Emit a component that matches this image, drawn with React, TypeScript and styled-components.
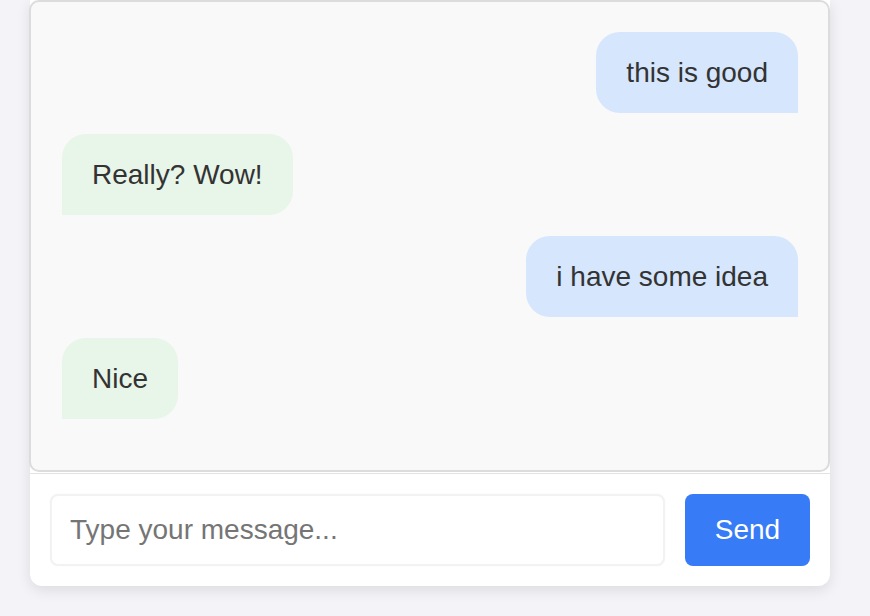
import React from "react";
import styled, { createGlobalStyle } from "styled-components";

const Global = createGlobalStyle`
  html, body {
    margin: 0;
    padding: 0;
    background: #f3f3f8;
    font-family: "Liberation Sans", Arial, sans-serif;
  }
  * { box-sizing: border-box; }
`;

const Page = styled.div`
  width: 870px;
  height: 616px;
  padding: 0 40px 0 30px;
  overflow: hidden;
`;

const Card = styled.div`
  width: 800px;
  background: #ffffff;
  border-radius: 0 0 12px 12px;
  box-shadow: 0 4px 14px rgba(0, 0, 0, 0.1);
  display: flex;
  flex-direction: column;
`;

const Messages = styled.div`
  height: 472px;
  margin: 0 0 1px -1px;
  border: 2px solid #dcdcdc;
  border-radius: 10px;
  background: #f9f9f9;
  padding: 30px 30px 30px 31px;
  display: flex;
  flex-direction: column;
  gap: 21px;
`;

const Bubble = styled.div<{ $mine?: boolean }>`
  align-self: ${(p) => (p.$mine ? "flex-end" : "flex-start")};
  background: ${(p) => (p.$mine ? "#d6e6fc" : "#e8f5e9")};
  color: #333333;
  font-size: 28px;
  line-height: 37px;
  padding: 22px 30px;
  border-radius: ${(p) => (p.$mine ? "24px 24px 0 24px" : "24px 24px 24px 0")};
`;

const InputBar = styled.div`
  border-top: 1px solid #e2e2e2;
  padding: 20px;
  display: flex;
  gap: 20px;
`;

const Input = styled.input`
  flex: 1;
  height: 72px;
  border: 2px solid #f2f2f2;
  border-radius: 8px;
  box-shadow: 0 0 2px rgba(0, 0, 0, 0.04);
  padding: 0 18px;
  font-family: "Liberation Sans", Arial, sans-serif;
  font-size: 28px;
  color: #333;
  background: #fff;
  outline: none;
  &::placeholder {
    color: #757575;
  }
`;

const SendButton = styled.button`
  width: 125px;
  height: 72px;
  border: none;
  border-radius: 8px;
  background: #387bf6;
  color: #ffffff;
  font-family: "Liberation Sans", Arial, sans-serif;
  font-size: 28px;
  cursor: pointer;
`;

const messages = [
  { text: "this is good", mine: true },
  { text: "Really? Wow!", mine: false },
  { text: "i have some idea", mine: true },
  { text: "Nice", mine: false },
];

export default function App() {
  return (
    <>
      <Global />
      <Page>
        <Card>
          <Messages>
            {messages.map((m, i) => (
              <Bubble key={i} $mine={m.mine}>
                {m.text}
              </Bubble>
            ))}
          </Messages>
          <InputBar>
            <Input placeholder="Type your message..." />
            <SendButton>Send</SendButton>
          </InputBar>
        </Card>
      </Page>
    </>
  );
}
